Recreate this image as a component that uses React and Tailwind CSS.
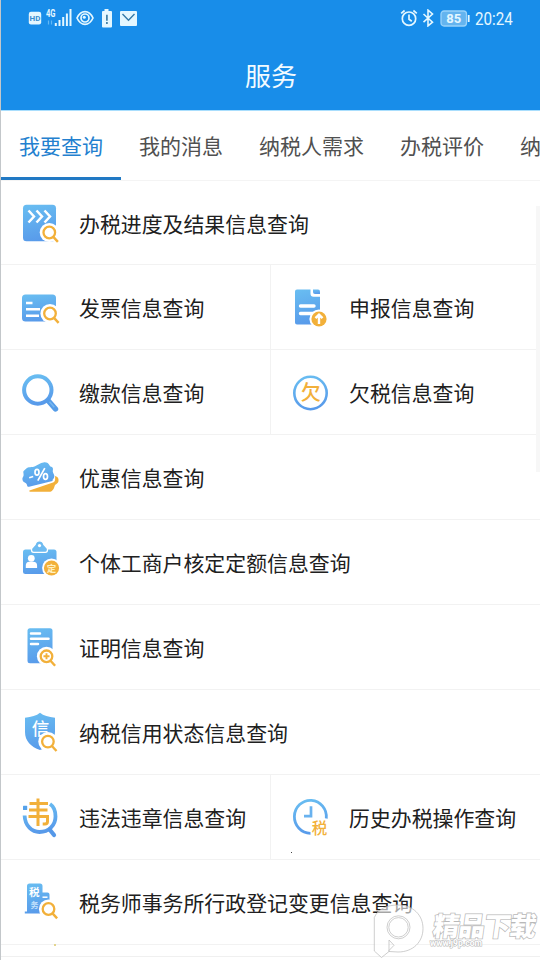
import { Fragment } from "react";

const TABS = ["我要查询", "我的消息", "纳税人需求", "办税评价", "纳"];

const BLUE = "url(#blue)";
const GOLD = "#f2b03a";

function Glass({ x, y, r = 5.8, children }) {
  return (
    <g>
      <circle cx={x} cy={y} r={r + 3.8} fill="#fff" />
      <path d={`M${x + 4} ${y + 4.4}l4.6 5`} stroke="#fff" strokeWidth="5" />
      <circle cx={x} cy={y} r={r} fill="#fff" stroke={GOLD} strokeWidth="2.3" />
      <path d={`M${x + 4} ${y + 4.4}l4.6 5`} stroke={GOLD} strokeWidth="2.4" />
      {children}
    </g>
  );
}

function Glyph({ x, y, size, fill, weight = 700, children }) {
  return (
    <text x={x} y={y} fontSize={size} fill={fill} fontWeight={weight} textAnchor="middle">
      {children}
    </text>
  );
}

const ICONS = {
  progress: (
    <>
      <rect x="3" y="1.8" width="33" height="36.4" rx="3.5" fill={BLUE} />
      <path d="M8.500 7.500l5.500 6-5.500 6M16.500 7.500l5.500 6-5.500 6M24.500 7.500l5.500 6-5.500 6" fill="none" stroke="#fff" strokeWidth="2.500" />
      <Glass x={29.3} y={29.5} />
    </>
  ),
  invoice: (
    <>
      <rect x="2" y="7.5" width="34" height="27" rx="3.5" fill={BLUE} />
      <path d="M6 16h6.500M6 22.300h14M6 28.800h13" stroke="#fff" strokeWidth="2.600" />
      <Glass x={30} y={26.500} />
    </>
  ),
  declare: (
    <>
      <path d="M7 2.500h13.500v4.200a3 3 0 0 0 3 3H30V36a1.500 1.500 0 0 1-1.500 1.500H7A2 2 0 0 1 5 35.500V4.500a2 2 0 0 1 2-2z" fill={BLUE} />
      <path d="M23 2.500h5a2 2 0 0 1 2 2V7h-5a2 2 0 0 1-2-2z" fill={BLUE} />
      <path d="M10.500 19h13.500M10.500 26.500h13" stroke="#fff" strokeWidth="3.400" strokeLinecap="round" />
      <circle cx="29" cy="32" r="9.600" fill="#fff" />
      <circle cx="29" cy="32" r="7.600" fill={GOLD} />
      <path d="M29 37v-9M25.500 31.200L29 27.600l3.500 3.600" fill="none" stroke="#fff" strokeWidth="2.400" />
    </>
  ),
  payment: (
    <>
      <circle cx="17.800" cy="18" r="13.700" fill="none" stroke={BLUE} strokeWidth="4" />
      <path d="M28.500 29l7 8" stroke="#559ce8" strokeWidth="5.400" strokeLinecap="round" />
      <path d="M29.500 29.800l4.800 5.400" stroke="#78b8f0" strokeWidth="1.400" />
    </>
  ),
  arrears: (
    <>
      <circle cx="20.500" cy="21" r="16.200" fill="none" stroke={BLUE} strokeWidth="2.600" />
      <Glyph x={20.800} y={28.400} size={20} fill={GOLD} weight={500}>欠</Glyph>
    </>
  ),
  discount: (
    <>
      <path d="M9.500 33.500L33 25.500c2-.7 2.500-2.500 2-6.500 3 .5 3.800 2.500 3.500 5-.5 3-3 3-3.700 4.500-.8 2-.5 3.500-3 5.500-1 .8-2 .8-3.500.8H11c-1.500 0-2.500-.8-1.500-1.300z" fill={GOLD} />
      <path d="M6.300 11.500c1.700-2 5.500-.8 8.700-2.300 3.500-1.700 5-3.500 8.500-3.800 3.200-.4 5 .8 6.300 3.300.4 1.200 2.600.9 3 2.200.6 1.800-.5 2.600.2 4.600.6 1.800 1.500 2 1.300 4.200-.2 2-2 2.300-1.800 4.300L9 29.800c-1.400.3-1.800-.6-2.100-2-.5-2.400-3-1.500-4.300-4.500-.8-2.200.8-3.300 1-5 .2-2.500-1-3.300.3-4.500z" fill={BLUE} />
      <g fill="none" stroke="#fff" strokeWidth="1.700">
        <path d="M9.200 20.700l4-1.200M17.800 23.700l7-12.500" />
        <ellipse cx="17" cy="15.300" rx="2" ry="2.900" />
        <ellipse cx="25.500" cy="19.500" rx="2" ry="2.900" />
      </g>
    </>
  ),
  individual: (
    <>
      <rect x="3" y="7.500" width="33.500" height="24.500" rx="2.500" fill={BLUE} />
      <path
        d="M19.500-1.200c2.200 0 3.800 1.500 4.300 3.600l3 3.400q.7.700.7 1.800v.4q0 2.400-2.200 2.400H13.700q-2.200 0-2.200-2.400v-.4q0-1.100.7-1.800l3-3.400c.5-2.100 2.100-3.600 4.300-3.600z"
        fill="#6ebbf1"
        stroke="#fff"
        strokeWidth="1.300"
      />
      <circle cx="19.500" cy="3.600" r="1.600" fill="#fff" />
      <circle cx="11.300" cy="16.300" r="3.400" fill="#fff" />
      <path d="M5.800 26v-2.200q0-4 3.500-4h4q3.800 0 3.800 4V26z" fill="#fff" />
      <circle cx="31.500" cy="26" r="9.400" fill="#fff" />
      <circle cx="31.500" cy="26" r="7.600" fill={GOLD} />
      <Glyph x={31.500} y={29.500} size={9.500} fill="#fff0c0">定</Glyph>
    </>
  ),
  certificate: (
    <>
      <rect x="7.500" y="1.200" width="25" height="35" rx="2.500" fill={BLUE} />
      <path d="M11 6.500h9M11 11.800h17.500M11 17h7" stroke="#fff" strokeWidth="2.500" strokeLinecap="round" />
      <Glass x={26.500} y={29.300}>
        <path d="M26.500 26.300v6M23.500 29.300h6" stroke={GOLD} strokeWidth="1.900" />
      </Glass>
    </>
  ),
  credit: (
    <>
      <path d="M20 .8c3.500 3 8.500 4.300 15 5V20c0 9-6 15-15 18-9-3-15-9-15-18V5.800c6.500-.7 11.500-2 15-5z" fill={BLUE} />
      <Glyph x={20.500} y={22.500} size={17.500} fill="#fff" weight={500}>信</Glyph>
      <Glass x={27.900} y={29.600} />
    </>
  ),
  violation: (
    <>
      <rect x="3" y="8.800" width="4.200" height="4.200" rx=".6" fill="#55a2ea" />
      <path d="M4.600 18.500C5 29 12 35 19.500 35c9 0 16-6.500 16-15.500 0-6-2.500-10.500-5.500-12.500" fill="none" stroke={BLUE} strokeWidth="3.800" />
      <path d="M30 33l4 5" stroke="#5598e8" strokeWidth="4.200" strokeLinecap="round" />
      <path d="M9.500 7h18.500M9 13.500h18.500M8.500 20h19v4.500q0 2.500-2.500 2.500h-2M18 2v26.500" fill="none" stroke="#fff" strokeWidth="5.500" />
      <path d="M9.500 6.500h18.500M9 13h18.500M8.500 19.500h19v5q0 2.500-2.500 2.500h-2.300M18 1.500v27.500" fill="none" stroke={GOLD} strokeWidth="3" />
    </>
  ),
  history: (
    <>
      <path d="M36.300 21.500A16 16.500 0 1 0 20.500 36.300" fill="none" stroke={BLUE} strokeWidth="2.800" />
      <path d="M21 9.200v10h-7" fill="none" stroke="#69b2ef" strokeWidth="2.700" />
      <Glyph x={29.500} y={36.700} size={15.500} fill={GOLD} weight={500}>税</Glyph>
    </>
  ),
  office: (
    <>
      <path d="M7 29.500V4q0-2.500 2.500-2.500h10.500q2.500 0 2.500 2.500v6.500h5q2 0 2 2v19H4.800v-2z" fill={BLUE} />
      <Glyph x={14.300} y={14.300} size={10.500} fill="#fff">税</Glyph>
      <Glyph x={14.500} y={25.500} size={8} fill="#c4e1fb">务</Glyph>
      <path d="M22.500 15.200h5" stroke="#fff" strokeWidth="1.500" />
      <Glass x={28.500} y={27} />
    </>
  ),
};

const ROWS = [
  [["progress", "办税进度及结果信息查询"]],
  [["invoice", "发票信息查询"], ["declare", "申报信息查询"]],
  [["payment", "缴款信息查询"], ["arrears", "欠税信息查询"]],
  [["discount", "优惠信息查询"]],
  [["individual", "个体工商户核定定额信息查询"]],
  [["certificate", "证明信息查询"]],
  [["credit", "纳税信用状态信息查询"]],
  [["violation", "违法违章信息查询"], ["history", "历史办税操作查询"]],
  [["office", "税务师事务所行政登记变更信息查询"]],
];

function StatusBar() {
  return (
    <div className="flex h-9 items-center justify-between pr-[26px] pl-[27px] text-[#e4f7ff]">
      <div className="flex items-center">
        <svg width="14" height="14" viewBox="0 0 14 14">
          <rect x=".8" y=".8" width="12.400" height="12.600" rx="2.200" fill="currentColor" />
          <text x="7" y="10" fontSize="8" fontWeight="700" textAnchor="middle" fill="#3a8ed0" className="font-[Roboto,sans-serif]">HD</text>
        </svg>
        <svg width="27" height="20" viewBox="0 0 27 20" className="ml-[3px]">
          <text x="1" y="9" fontSize="10.500" fontWeight="700" fill="currentColor" textLength="9.500" lengthAdjust="spacingAndGlyphs" className="font-[Roboto,sans-serif]">4G</text>
          <path d="M3.500 12.500v4M6.500 12.500v4" stroke="#63b8f5" strokeWidth="1.200" />
          <path d="M10.800 18v-3M14.500 18v-6M18.200 18V9M21.900 18V5.500M25.500 18V1" stroke="currentColor" strokeWidth="2" />
        </svg>
        <svg width="18" height="16" viewBox="0 0 18 16" className="ml-1">
          <path d="M1 8c4-8.600 12-8.600 16 0-4 8.600-12 8.600-16 0z" fill="none" stroke="currentColor" strokeWidth="1.700" />
          <circle cx="9" cy="8" r="4" fill="none" stroke="currentColor" strokeWidth="1.700" />
          <circle cx="8.300" cy="7.200" r="1.500" fill="currentColor" />
        </svg>
        <svg width="12" height="19" viewBox="0 0 12 19" className="ml-[7px]">
          <path d="M3.500 0h4v2H10q1 0 1 1v14.500q0 1-1 1H2q-1 0-1-1V3q0-1 1-1h1.500z" fill="currentColor" />
          <path d="M5.900 5.700v6M5.900 13v2" stroke="#32759f" strokeWidth="1.600" />
        </svg>
        <svg width="17" height="15" viewBox="0 0 17 15" className="ml-[7px]">
          <rect width="17" height="15" rx="1" fill="currentColor" />
          <path d="M2.500 3l6 6.200 6-6.200" fill="none" stroke="#357aa8" strokeWidth="1.400" />
        </svg>
      </div>
      <div className="flex items-center">
        <svg width="18" height="18" viewBox="0 0 18 18" fill="none" stroke="currentColor" strokeWidth="1.700">
          <circle cx="9" cy="9.700" r="6.700" />
          <path d="M9 5.500v4.700l2.800 2M1.200 4.400l3.400-2.900M16.800 4.400l-3.400-2.900" />
        </svg>
        <svg width="12" height="18" viewBox="0 0 12 18" fill="none" stroke="currentColor" strokeWidth="1.600" className="ml-1">
          <path d="M1.500 5l9 8.200-4.500 3.700V1.100L10.500 5l-9 8.200" />
        </svg>
        <svg width="30" height="17" viewBox="0 0 30 17" className="ml-[6px]">
          <rect x="1" y="1" width="25.500" height="15" rx="3" fill="#64b4ef" stroke="#98d2fa" strokeWidth="1.300" />
          <path d="M28.700 5v7" stroke="currentColor" strokeWidth="1.800" />
          <text x="13.800" y="13" fontSize="13" fontWeight="700" textAnchor="middle" fill="currentColor" className="font-[Roboto,sans-serif]">85</text>
        </svg>
        <span className="mt-[3px] ml-[5px] w-[39px] font-[Roboto,sans-serif] text-[18.500px]">
          <span className="block origin-left scale-x-[0.82]">20:24</span>
        </span>
      </div>
    </div>
  );
}

function ServiceItem({ icon, label }) {
  return (
    <button className="flex min-w-0 flex-1 items-center text-left">
      <svg width="40" height="40" viewBox="0 0 40 40" className="ml-[19px] shrink-0 overflow-visible">
        {ICONS[icon]}
      </svg>
      <span className="mt-[2px] ml-[19px] text-[20.900px] whitespace-nowrap text-[#202020]">{label}</span>
    </button>
  );
}

function Watermark() {
  return (
    <svg
      width="168"
      height="58"
      viewBox="372 902 168 58"
      className="absolute right-0 bottom-0"
      stroke="#b9b9b9"
    >
      <g fill="#fff" fillOpacity=".6" strokeWidth=".7">
        <path d="M374.300 917.500C378 909 387 905 398 905c15 0 25 10 25 23.500S413 952 398 952l-9-.5v-1l5-5.200-5-5.300v11.500l-7.500 6-7.200-6.500z" />
        <circle cx="398.500" cy="927.300" r="11.500" />
        <circle cx="398.500" cy="927.300" r="9.700" />
      </g>
      <g transform="translate(432 936) skewX(-8)" fill="#fff" strokeWidth="1.500" paintOrder="stroke">
        <text fontSize="26.500" fontWeight="900" textLength="103">精品下载</text>
      </g>
      <text x="430" y="945.500" fontSize="9" fontWeight="700" fill="#fff" strokeWidth="1.200" paintOrder="stroke" textLength="52" lengthAdjust="spacingAndGlyphs" className="font-[Roboto,sans-serif]">www.j9p.com</text>
    </svg>
  );
}

export default function App() {
  return (
    <div className="relative flex h-[960px] w-[540px] flex-col overflow-hidden border-l border-[#c3c7ca] bg-white font-['Noto_Sans_CJK_SC',sans-serif]">
      <svg width="0" height="0" className="absolute">
        <linearGradient id="blue" x1="0.300" y1="0" x2="0.500" y2="1">
          <stop offset="0" stopColor="#68bcf1" />
          <stop offset="1" stopColor="#589aea" />
        </linearGradient>
      </svg>

      <header className="h-[110px] shrink-0 bg-[#188de9]">
        <StatusBar />
        <h1 className="pt-[19px] pl-px text-center text-[26px] leading-[40px] text-[#f2fbff]">服务</h1>
      </header>

      <nav className="flex h-[71px] shrink-0 overflow-hidden border-t border-t-[#a9defd] border-b border-b-[#f4f4f4]">
        {TABS.map((tab, i) => (
          <button
            key={tab}
            className={`shrink-0 border-b-[3px] px-[18px] pt-[3px] text-[21px] whitespace-nowrap ${
              i === 0 ? "border-[#2179c4] text-[#2380cf]" : "border-transparent text-[#505050]"
            }`}
          >
            {tab}
          </button>
        ))}
      </nav>

      <main>
        {ROWS.map((row) => (
          <div key={row[0][0]} className="flex h-[85px] border-b border-[#f2f2f2] first:h-[84px]">
            {row.map(([icon, label], i) => (
              <Fragment key={icon}>
                {i > 0 && <div className="w-px bg-[#f2f2f2]" />}
                <ServiceItem icon={icon} label={label} />
              </Fragment>
            ))}
          </div>
        ))}
        <div className="h-3 border-b border-[#f0f0f0]" />
      </main>

      {/* scroll indicator */}
      <div className="absolute top-[206px] right-0 h-[266px] w-1 bg-[#f7f7f7]" />
      <div className="absolute top-[852px] left-[290px] size-px bg-[#444]" />
      <div className="absolute top-[944px] left-[53px] size-[2px] bg-[#e3d48e]" />
      <Watermark />
    </div>
  );
}
